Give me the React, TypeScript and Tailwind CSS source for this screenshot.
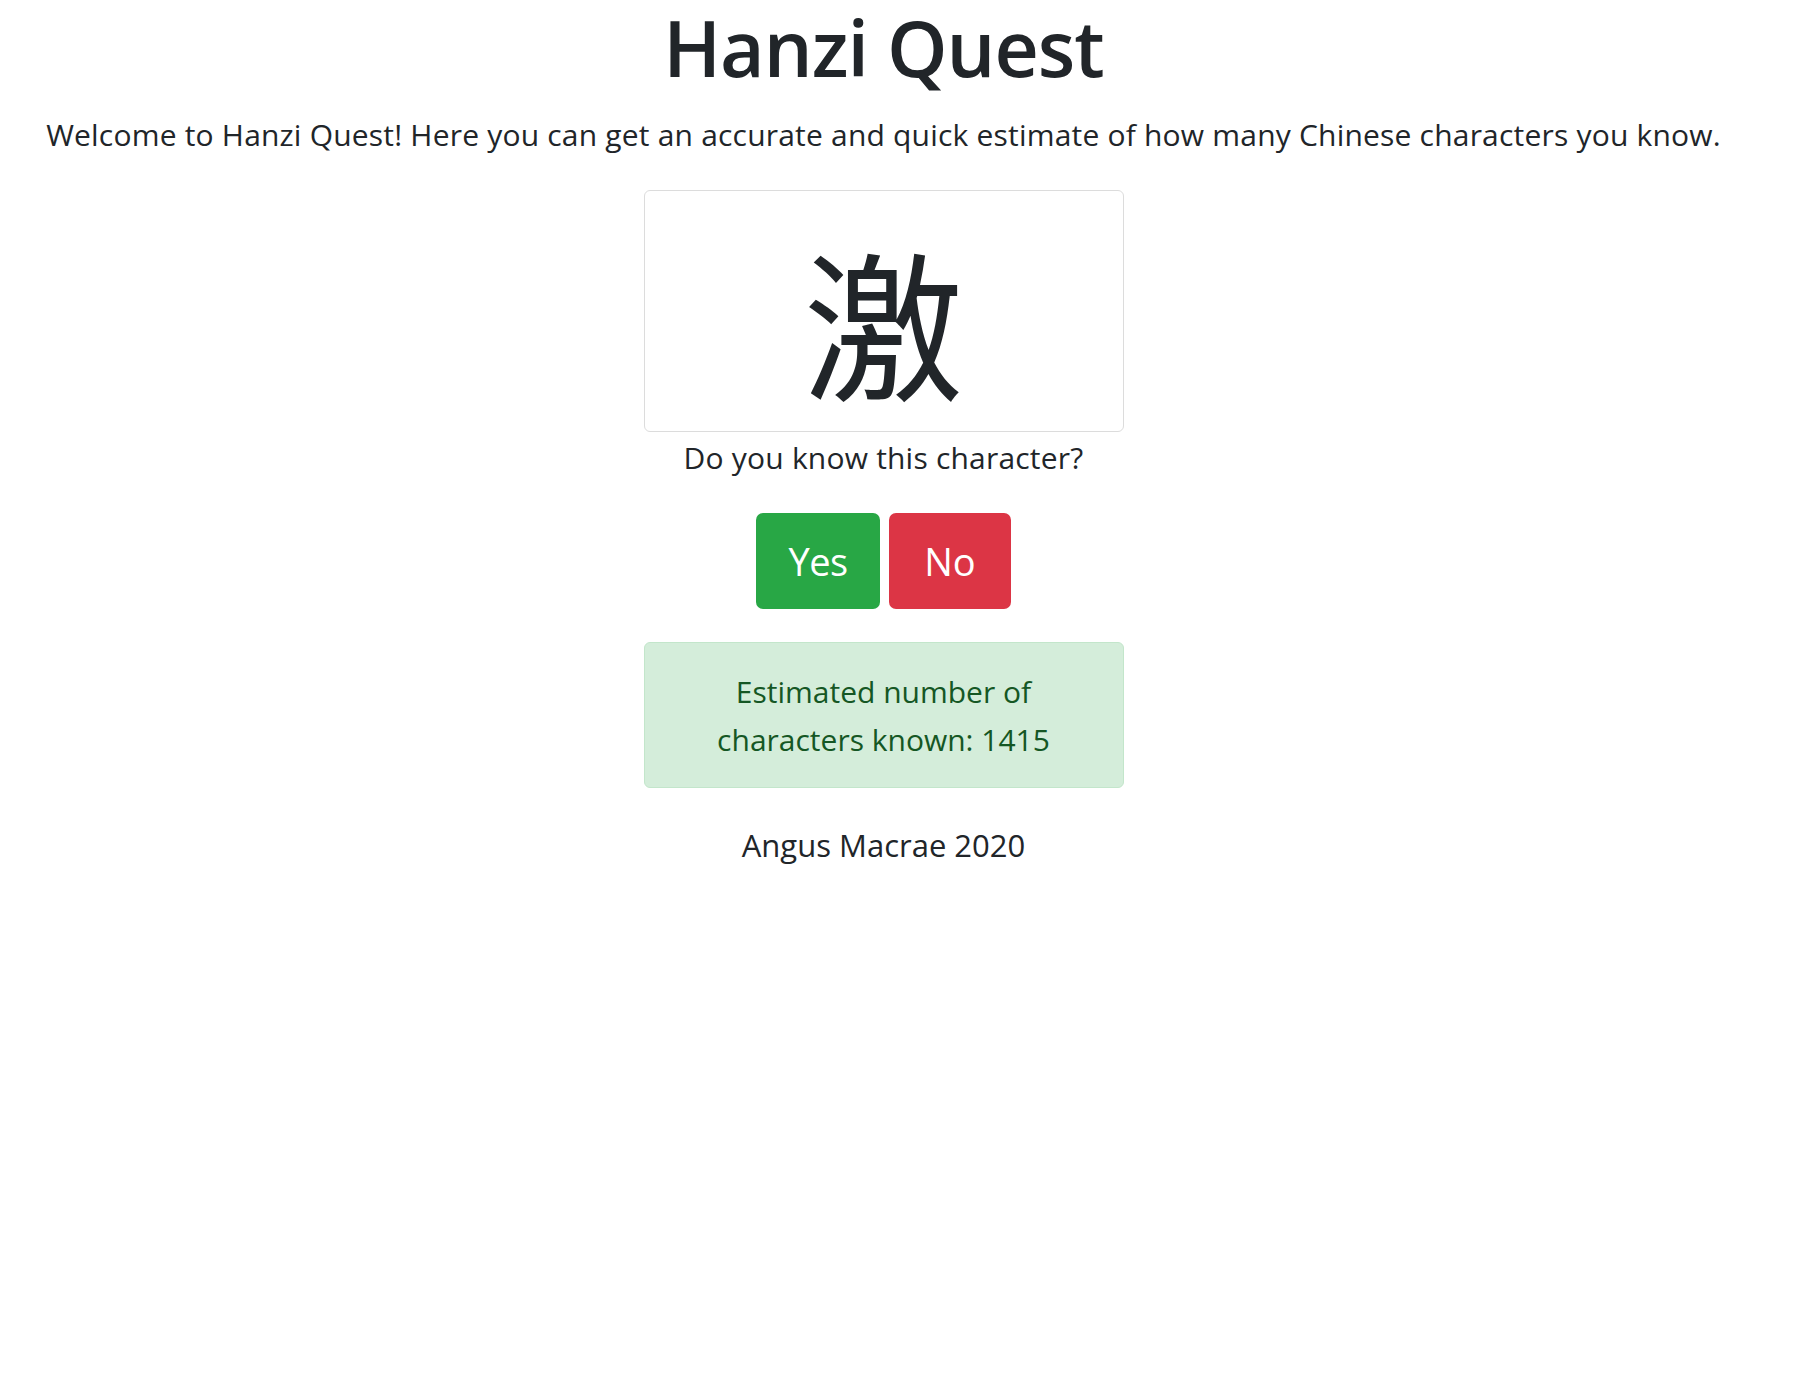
export default function App() {
  return (
    <div
      className="min-h-screen w-full bg-white text-[#212529]"
      style={{ fontFamily: '"Open Sans", "Noto Sans", sans-serif' }}
    >
      <div className="flex w-[1767px] flex-col items-center text-center">
        <h1 className="text-[77px] font-semibold leading-[96px] tracking-[-1px]">Hanzi Quest</h1>
        <p className="mt-[17px] text-[30px] leading-[44px] tracking-[0.2px]">
          Welcome to Hanzi Quest! Here you can get an accurate and quick estimate of how many Chinese characters you know.
        </p>

        <div className="mt-[33px] flex h-[242px] w-[480px] justify-center rounded-[6px] border border-[#dcdcdc] pt-[48px]">
          <div
            className="text-[160px] leading-[160px]"
            style={{ fontFamily: '"Noto Sans CJK SC", "Noto Sans CJK TC", sans-serif' }}
          >
            激
          </div>
        </div>
        <p className="mt-[4px] text-[30px] leading-[44px] tracking-[0.2px]">Do you know this character?</p>

        <div className="mt-[33px] flex gap-[9px]">
          <button className="flex h-[96px] w-[124px] items-center justify-center rounded-[7px] bg-[#28a745] text-[38px] tracking-[-0.5px] text-white">
            Yes
          </button>
          <button className="flex h-[96px] w-[122px] items-center justify-center rounded-[7px] bg-[#dc3545] text-[38px] text-white">
            No
          </button>
        </div>

        <div className="mt-[33px] h-[146px] w-[480px] rounded-[6px] border border-[#c3e6cb] bg-[#d4edda] px-[50px] pt-[25px] text-[30px] leading-[48px] text-[#155724]">
          Estimated number of characters known: 1415
        </div>

        <p className="mt-[35px] text-[31px] leading-[45px]">Angus Macrae 2020</p>
      </div>
    </div>
  );
}
